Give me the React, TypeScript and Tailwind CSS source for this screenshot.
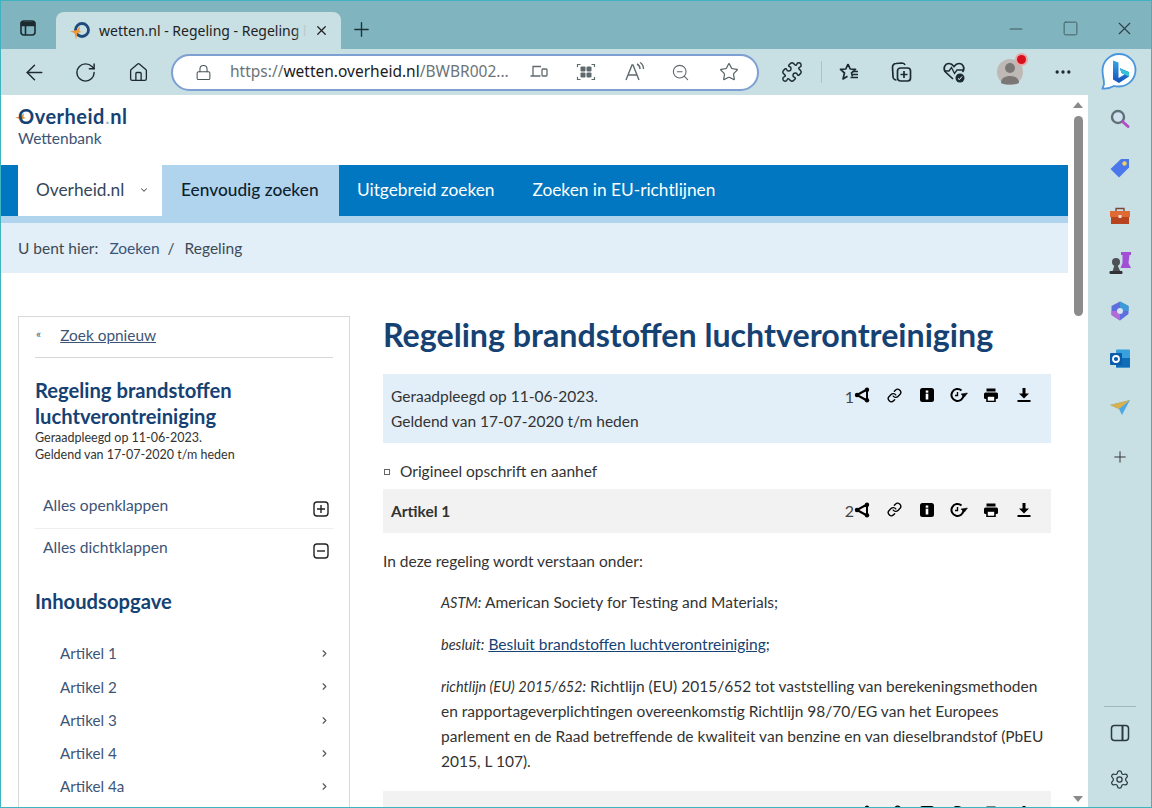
import React from 'react';
import {
  ArrowLeft, RotateCw, Home, Lock, Star, ZoomOut, Puzzle, Plus, X, Minus, Square, ChevronDown, ChevronRight,
  MoreHorizontal, Settings, Link as LinkIcon,
} from 'lucide-react';

const font = { sans: 'font-["Lato","Noto_Sans",sans-serif]' };

function TabsIcon() {
  return (
    <svg width="20" height="20" viewBox="0 0 20 20" fill="none" stroke="#1c2b30" strokeWidth="1.6">
      <rect x="3" y="3" width="14" height="14" rx="3" />
      <path d="M3.5 4.5h13v3h-13z" fill="#1c2b30" />
      <path d="M7.5 7v10" />
    </svg>
  );
}

function Favicon() {
  return (
    <svg width="22" height="22" viewBox="0 0 22 22" fill="none">
      <circle cx="13" cy="10" r="6.500" stroke="#1f4a7c" strokeWidth="2.800" />
      <path d="M1 11.500l7-1.500 3-4-.5 5 2 1-4 1-1.500 6.500-1.500-6.500z" fill="#f09a37" />
    </svg>
  );
}

function ReadAloud() {
  return (
    <svg width="24" height="24" viewBox="0 0 24 24" fill="none" stroke="#5f6a6e" strokeWidth="1.4">
      <path d="M3 20L9 5h1l6 15M5.5 15h9" />
      <path d="M14 4c2 1 3 3 3 5M17 2.5c2.500 1.500 3.500 4 3.500 6.500" />
    </svg>
  );
}

function AppsIcon() {
  return (
    <svg width="20" height="20" viewBox="0 0 20 20" fill="none">
      <path d="M1.500 5V2.500h3M15.500 2.500h3V5M18.500 15v2.500h-3M4.500 17.500h-3V15" stroke="#5f6a6e" strokeWidth="1.200" />
      <rect x="4.500" y="4.500" width="5" height="5" rx="1" fill="#5f6a6e" />
      <rect x="10.500" y="4.500" width="5" height="5" rx="1" fill="#5f6a6e" />
      <rect x="4.500" y="10.500" width="5" height="5" rx="1" fill="#5f6a6e" />
      <rect x="10.500" y="10.500" width="5" height="5" rx="1" fill="#5f6a6e" />
    </svg>
  );
}

function DeviceIcon() {
  return (
    <svg width="20" height="20" viewBox="0 0 20 20" fill="none" stroke="#5f6a6e" strokeWidth="1.300">
      <path d="M12 4.500H4v9M1.500 14h10" />
      <rect x="13" y="7" width="5" height="7" rx="1" />
    </svg>
  );
}

function FavoritesIcon() {
  return (
    <svg width="24" height="24" viewBox="0 0 24 24" fill="none" stroke="#1c2b30" strokeWidth="1.700">
      <path d="M11 4l2.200 5 5.300.4-4 3.500 1 3.500M11 4L8.800 9l-5.300.4 4 3.600-1.500 6 4.500-2.800" strokeLinejoin="round" />
      <path d="M15.500 11.500H21M15.500 14.500H21M13.500 17.500H21" strokeWidth="1.300" />
    </svg>
  );
}

function CollectionsIcon() {
  return (
    <svg width="24" height="24" viewBox="0 0 24 24" fill="none" stroke="#1c2b30" strokeWidth="1.700">
      <path d="M7.500 20A3.500 3.500 0 0 1 4 16.500l-.5-9C3.400 5 5 3.500 7 3.500l6-.5c1.500 0 2.600.8 3 2" />
      <rect x="8.500" y="8" width="13" height="13" rx="3" />
      <path d="M15 11v7M11.500 14.500h7" />
    </svg>
  );
}

function HealthIcon() {
  return (
    <svg width="26" height="26" viewBox="0 0 26 26" fill="none">
      <path d="M12 20L4.500 13C1.500 9.500 4 4.500 8 4.500c2 0 3.500 1 5 3 1.500-2 3-3 5-3 4 0 6.500 5 3.500 8.500" stroke="#1c2b30" strokeWidth="1.700" />
      <path d="M3 12h5l2.500-3.500 3 6L16 11h6" stroke="#1c2b30" strokeWidth="1.300" />
      <circle cx="19" cy="19" r="4.500" fill="#1c2b30" />
      <path d="M17 19.500l1.500 1 2.500-3" stroke="#fff" strokeWidth="1" />
    </svg>
  );
}

function Avatar() {
  return (
    <div className="relative flex h-[26px] w-[26px] items-center justify-center overflow-visible rounded-full bg-[#bfb9b6]">
      <svg width="22" height="25" viewBox="0 0 22 25" fill="#7a7775">
        <circle cx="11" cy="8" r="5" />
        <path d="M2 23c0-5 4-7 9-7s9 2 9 7c-3 2-15 2-18 0z" />
      </svg>
      <span className="absolute right-[-3px] top-[-4px] h-[9px] w-[9px] rounded-full bg-[#d8101c] ring-2 ring-[#e6a6a8]" />
    </div>
  );
}

function BingButton() {
  return (
    <svg width="38" height="40" viewBox="0 0 38 40" fill="none">
      <defs>
        <linearGradient id="bingStem" x1="0" y1="0" x2="0" y2="1">
          <stop offset="0" stopColor="#37a5e8" />
          <stop offset="1" stopColor="#1450b8" />
        </linearGradient>
      </defs>
      <path d="M19 2C10 2 2.500 9.500 2.500 18.500c0 5 1.500 9 1.500 13 0 2-1 3.500-1.500 5 6 .5 9-1 11.500-2.500 1.500.4 3.300.5 5 .5 9 0 16.500-7.500 16.500-16.500S28 2 19 2z" fill="#fff" stroke="#4a96dc" strokeWidth="1.800" />
      <path d="M13 8.500l5.500 2v15.500l6-3.500-3-1.500-1.800-5 9.300 4v4.500L19 31l-6-3.500z" fill="url(#bingStem)" />
      <path d="M20 16.500l9 3.800v4.500l-4.500-2.300-3-1.500z" fill="#35c3d8" />
    </svg>
  );
}

function ShareIcon() {
  return (
    <svg width="16" height="16" viewBox="0 0 16 16" fill="none">
      <path d="M13 2.500L3 8l10 5.500z" stroke="#000" strokeWidth="2" strokeLinejoin="round" fill="none" />
      <circle cx="3" cy="8" r="2.200" fill="#000" />
      <circle cx="13" cy="2.700" r="2.200" fill="#000" />
      <circle cx="13" cy="13.300" r="2.200" fill="#000" />
    </svg>
  );
}

function InfoIcon() {
  return (
    <svg width="14" height="14" viewBox="0 0 14 14">
      <rect width="14" height="14" rx="2.500" fill="#000" />
      <rect x="5.700" y="2.500" width="2.600" height="2.200" fill="#fff" />
      <rect x="5.700" y="5.700" width="2.600" height="5.800" fill="#fff" />
    </svg>
  );
}

function HistoryIcon() {
  return (
    <svg width="18" height="16" viewBox="0 0 18 16" fill="none" stroke="#000">
      <path d="M13.500 8a6 6 0 1 1-2-4.500" strokeWidth="2" />
      <path d="M7.500 5v3.500H5" strokeWidth="1.400" />
      <path d="M11 7l3.500 3L17.500 6z" fill="#000" strokeWidth="0.500" />
    </svg>
  );
}

function PrintIcon() {
  return (
    <svg width="16" height="14" viewBox="0 0 16 14" fill="#000">
      <rect x="3.500" y="0.500" width="9" height="3" />
      <rect x="1" y="4.500" width="14" height="6.500" rx="1.500" />
      <rect x="4" y="8" width="8" height="5.500" fill="#fff" stroke="#000" strokeWidth="1.600" />
    </svg>
  );
}

function DownloadIcon() {
  return (
    <svg width="16" height="16" viewBox="0 0 16 16" fill="#000">
      <path d="M6.500 1h3v5.500H13L8 11.500 3 6.500h3.500z" />
      <rect x="1.500" y="13" width="13" height="2" />
    </svg>
  );
}

function ActionIcons({ index }: { index: number }) {
  return (
    <div className="flex items-center">
      <span className="mt-[3px] text-[16px] leading-none text-[#444]">{index}</span>
      <div className="flex w-[16px] justify-center"><ShareIcon /></div>
      <div className="ml-[16px] flex w-[16px] justify-center"><LinkIcon size={15} strokeWidth={2.200} color="#000" /></div>
      <div className="ml-[17px] flex w-[16px] justify-center"><InfoIcon /></div>
      <div className="ml-[15px] flex w-[18px] justify-center"><HistoryIcon /></div>
      <div className="ml-[15px] flex w-[16px] justify-center"><PrintIcon /></div>
      <div className="ml-[17px] flex w-[16px] justify-center"><DownloadIcon /></div>
    </div>
  );
}

function SidebarIcons() {
  return (
    <div className="flex flex-col items-center">
      <svg className="mt-[13px]" width="22" height="22" viewBox="0 0 22 22" fill="none">
        <circle cx="9" cy="9" r="6" stroke="#5f7076" strokeWidth="2.400" fill="#cfe2ee" />
        <path d="M13.500 13.500l5.500 5" stroke="#b04ec8" strokeWidth="3" strokeLinecap="round" />
      </svg>
      <svg className="mt-[27px]" width="22" height="22" viewBox="0 0 22 22">
        <path d="M1.500 12L12 2h8v8.500L10 20.500z" fill="#4a77ea" />
        <circle cx="15.500" cy="6.500" r="2.200" fill="#f2d25b" />
      </svg>
      <svg className="mt-[26px]" width="22" height="22" viewBox="0 0 22 22">
        <path d="M7 6V3.500h8V6" fill="none" stroke="#7b4a36" strokeWidth="1.400" />
        <rect x="1" y="6" width="20" height="6" fill="#df6a34" />
        <rect x="2" y="12" width="18" height="7" fill="#b8431f" />
        <rect x="9.500" y="10" width="3" height="3" fill="#f6dfd0" />
      </svg>
      <svg className="mt-[24px]" width="24" height="24" viewBox="0 0 24 24">
        <rect x="13" y="1" width="10" height="3" fill="#a24fd6" />
        <path d="M14.500 4h7l-1 8 2.500 5H12.500l2-5z" fill="#a24fd6" />
        <circle cx="8" cy="11" r="4" fill="#4d5054" />
        <path d="M4 22l2.500-8h3l3.500 8z" fill="#4d5054" />
        <rect x="1.500" y="20" width="13" height="3" rx="1" fill="#303235" />
      </svg>
      <svg className="mt-[25px]" width="22" height="22" viewBox="0 0 22 22" fill="none">
        <path d="M11 1.500L19.500 6v8L11 20.500 2.500 15V6z" fill="#5c6fdc" />
        <path d="M11 1.500L19.500 6v5H14a3 3 0 0 0-3-3z" fill="#3e9ad6" />
        <path d="M2.500 11H8a3 3 0 0 0 3 3v6.500L2.500 15z" fill="#b36ad6" />
        <circle cx="11" cy="11" r="3" fill="#d9e4f2" />
      </svg>
      <svg className="mt-[26px]" width="22" height="22" viewBox="0 0 22 22">
        <rect x="7" y="1.500" width="14" height="18" rx="1" fill="#38a0dc" />
        <rect x="7" y="10" width="14" height="9.500" fill="#0f6cb6" />
        <rect x="1" y="5" width="12" height="12" rx="1" fill="#0a5ba8" />
        <circle cx="7" cy="11" r="3" fill="none" stroke="#fff" strokeWidth="1.800" />
      </svg>
      <svg className="mt-[28px]" width="22" height="20" viewBox="0 0 22 20">
        <path d="M1 7L21 2l-8 15-3-6z" fill="#4da8e4" />
        <path d="M1 7l9 4 11-9z" fill="#d8b14e" />
      </svg>
      <Plus className="mt-[30px]" size={18} strokeWidth={1.300} color="#333" />
    </div>
  );
}

function Address() {
  return (
    <div className="ml-[22px] flex h-[37px] w-[588px] items-center rounded-full border-2 border-[#7d9fd2] bg-white pl-[22px]">
      <Lock size={17} strokeWidth={1.500} color="#4a5559" />
      <span className='ml-[18px] font-["Noto_Sans",sans-serif] text-[15.500px] text-[#6c7478]'>
        https://<span className="text-[#1a1a1a]">wetten.overheid.nl</span>/BWBR002...
      </span>
      <div className="ml-[20px]"><DeviceIcon /></div>
      <div className="ml-[27px]"><AppsIcon /></div>
      <div className="ml-[27px]"><ReadAloud /></div>
      <ZoomOut className="ml-[24px]" size={19} strokeWidth={1.400} color="#5f6a6e" />
      <Star className="ml-[29px]" size={20} strokeWidth={1.400} color="#4f5a5e" />
    </div>
  );
}

function Browser() {
  return (
    <>
      {/* tab strip */}
      <div className="flex h-[48px] items-end bg-[#80b4bf] pl-[17px]">
        <div className="mb-[9px] flex h-[24px] items-center"><TabsIcon /></div>
        <div className="ml-[18px] flex h-[37px] w-[285px] items-center rounded-t-[8px] bg-[#c8dfe4] pl-[13px]">
          <Favicon />
          <div className="relative ml-[8px] w-[207px] overflow-hidden">
            <span className='block whitespace-nowrap font-["Noto_Sans",sans-serif] text-[14px] text-[#222]'>
              wetten.nl - Regeling - Regeling b
            </span>
            <div className="absolute inset-y-0 right-0 w-[12px] bg-linear-to-r from-transparent to-[#c8dfe4]" />
          </div>
          <X className="ml-[8px] shrink-0" size={15} strokeWidth={2} color="#222" />
        </div>
        <Plus className="mb-[8px] ml-[9px]" size={23} strokeWidth={1.400} color="#1f3036" />
        <div className="mb-[10px] ml-auto flex items-center">
          <div className="flex w-[54px] justify-center"><Minus size={20} strokeWidth={1.300} color="#41565c" /></div>
          <div className="flex w-[54px] justify-center"><Square size={17} strokeWidth={1.300} color="#41565c" /></div>
          <div className="flex w-[54px] justify-center"><X size={21} strokeWidth={1.300} color="#2f4046" /></div>
        </div>
      </div>
      {/* toolbar */}
      <div className="flex h-[46px] items-center bg-[#c8dfe4] pl-[21px]">
        <ArrowLeft size={25} strokeWidth={1.400} color="#1c2b30" />
        <RotateCw className="ml-[27px]" size={23} strokeWidth={1.500} color="#1c2b30" />
        <Home className="ml-[31px]" size={21} strokeWidth={1.500} color="#1c2b30" />
        <Address />
        <Puzzle className="ml-[22px]" size={22} strokeWidth={1.600} color="#1c2b30" />
        <div className="ml-[18px] h-[22px] w-px bg-[#aac3c9]" />
        <div className="ml-[15px]"><FavoritesIcon /></div>
        <div className="ml-[28px]"><CollectionsIcon /></div>
        <div className="ml-[28px]"><HealthIcon /></div>
        <div className="ml-[30px]"><Avatar /></div>
        <MoreHorizontal className="ml-[30px]" size={20} strokeWidth={2} color="#1c2b30" />
        <div className="ml-[27px] shrink-0"><BingButton /></div>
      </div>
    </>
  );
}

function SiteHeader() {
  return (
    <>
      <div className="h-[70px] pl-[17px] pt-[10px]">
        <div className="relative text-[20px] font-bold leading-[22px] tracking-[0.5px] text-[#154273]">
          <svg className="absolute left-[-3px] top-[6px]" width="14" height="14" viewBox="0 0 14 14">
            <path d="M0 6.500l6-1 3-3.500-.5 4 2.500 1-3.500 1-1 5-1.500-5z" fill="#e8902c" />
          </svg>
          <span className="relative">Overheid<span className="font-normal text-[#9db6c9]">.</span>nl</span>
        </div>
        <div className="text-[15.500px] leading-[22px] text-[#3d5476]">Wettenbank</div>
      </div>
      <div className="flex h-[51px] bg-[#0077c0] pl-[17px] text-[17.300px]">
        <div className="flex w-[144px] items-center bg-white pb-[2px] pl-[18px] text-[#33475b]">
          Overheid.nl
          <ChevronDown className="ml-[15px]" size={10} strokeWidth={2.500} color="#555" />
        </div>
        <div className="flex w-[177px] items-center bg-[#b1d4ee] pb-[2px] pl-[19px] font-medium text-[#0f1f2e]">Eenvoudig zoeken</div>
        <div className="flex items-center pb-[2px] pl-[18px] text-white">Uitgebreid zoeken</div>
        <div className="flex items-center pb-[2px] pl-[38px] text-white">Zoeken in EU-richtlijnen</div>
      </div>
      <div className="h-[7px] bg-[#b1d4ee]" />
      <div className="flex h-[50px] items-center bg-[#e2eff8] pl-[17px] pt-[1px] text-[15.500px] text-[#3f4a54]">
        <span>U bent hier:</span>
        <span className="ml-[11px] text-[#3d5476]">Zoeken</span>
        <span className="ml-[8px]">/</span>
        <span className="ml-[10px]">Regeling</span>
      </div>
    </>
  );
}

function LeftPanel() {
  const articles = ['Artikel 1', 'Artikel 2', 'Artikel 3', 'Artikel 4', 'Artikel 4a'];
  return (
    <aside className="h-[520px] w-[332px] shrink-0 border border-[#d9d9d9] px-[16px]">
      <div className="flex h-[41px] items-center border-b border-[#d6d6d6] pb-[2px] text-[15.400px]">
        <span className="mb-[4px] ml-px text-[12px] leading-none text-[#4b5d74]">«</span>
        <span className="ml-[19px] text-[#3d5476] underline">Zoek opnieuw</span>
      </div>
      <h2 className="mt-[19px] text-[20.200px] font-bold leading-[26px] text-[#154273]">
        Regeling brandstoffen<br />luchtverontreiniging
      </h2>
      <p className="text-[12.500px] leading-[17px] text-[#333]">
        Geraadpleegd op 11-06-2023.<br />Geldend van 17-07-2020 t/m heden
      </p>
      <div className="mt-[23px] flex h-[43px] items-center justify-between border-b border-[#eeeeee] pl-[8px] pr-[4px] text-[15.600px] text-[#3d5476]">
        <span className="mb-[3px]">Alles openklappen</span>
        <svg width="16" height="16" viewBox="0 0 16 16" fill="none" stroke="#222" strokeWidth="1.400" className="mt-[3px]">
          <rect x="1" y="1" width="14" height="14" rx="3" />
          <path d="M4 8h8M8 4v8" />
        </svg>
      </div>
      <div className="flex h-[41px] items-center justify-between pl-[8px] pr-[4px] text-[15.600px] text-[#3d5476]">
        <span className="mb-[3px]">Alles dichtklappen</span>
        <svg width="16" height="16" viewBox="0 0 16 16" fill="none" stroke="#222" strokeWidth="1.400" className="mt-[3px]">
          <rect x="1" y="1" width="14" height="14" rx="3" />
          <path d="M4 8h8" />
        </svg>
      </div>
      <h3 className="mt-[18px] text-[20.200px] font-bold leading-[26px] text-[#154273]">Inhoudsopgave</h3>
      <ul className="mt-[23px]">
        {articles.map((a) => (
          <li key={a} className="flex h-[33.300px] items-center justify-between pl-[25px] pr-[3px] text-[15.200px] text-[#3d5476]">
            {a}
            <ChevronRight size={11} strokeWidth={2.500} color="#555" />
          </li>
        ))}
      </ul>
    </aside>
  );
}

function MainContent() {
  return (
    <main className="ml-[33px] w-[668px] text-[15.500px] text-[#333]">
      <h1 className="whitespace-nowrap text-[32.200px] font-bold leading-[38px] text-[#154273]">Regeling brandstoffen luchtverontreiniging</h1>
      <div className="mt-[20px] flex h-[69px] justify-between bg-[#e2eff8] pl-[8px] pr-[19px]">
        <p className="pt-[10px] leading-[25px]">
          Geraadpleegd op 11-06-2023.<br />Geldend van 17-07-2020 t/m heden
        </p>
        <div className="flex h-[42px] items-center"><ActionIcons index={1} /></div>
      </div>
      <div className="flex h-[46px] items-center pl-[1px] pt-[12px]">
        <span className="h-[6px] w-[6px] border border-[#666]" />
        <span className="ml-[10px]">Origineel opschrift en aanhef</span>
      </div>
      <div className="flex h-[44px] items-center justify-between bg-[#f2f2f2] pl-[8px] pr-[19px]">
        <strong className="mt-[2px] font-bold">Artikel 1</strong>
        <div className="mb-[3px]"><ActionIcons index={2} /></div>
      </div>
      <p className="mt-[16px] leading-[24px]">In deze regeling wordt verstaan onder:</p>
      <div className="mt-[17px] pl-[58px] leading-[25px]">
        <p><i className="text-[14.500px]">ASTM:</i> American Society for Testing and Materials;</p>
        <p className="mt-[17px]"><i className="text-[14.500px]">besluit:</i> <span className="text-[#154273] underline">Besluit brandstoffen luchtverontreiniging</span>;</p>
        <p className="mt-[17px] whitespace-nowrap">
          <i className="text-[14.500px]">richtlijn (EU) 2015/652:</i> Richtlijn (EU) 2015/652 tot vaststelling van berekeningsmethoden<br />
          en rapportageverplichtingen overeenkomstig Richtlijn 98/70/EG van het Europees<br />
          parlement en de Raad betreffende de kwaliteit van benzine en van dieselbrandstof (PbEU<br />
          2015, L 107).
        </p>
      </div>
      <div className="mt-[17px] flex h-[44px] items-start justify-end bg-[#f2f2f2] pr-[19px] pt-[12px]">
        <ActionIcons index={3} />
      </div>
    </main>
  );
}

function Scrollbar() {
  return (
    <div className="flex w-[20px] shrink-0 flex-col items-center bg-white pt-[7px]">
      <div className="h-0 w-0 border-x-[5px] border-b-[6px] border-x-transparent border-b-[#8a8a8a]" />
      <div className="mt-[8px] h-[200px] w-[9px] rounded-full bg-[#8c8c8c]" />
      <div className="mb-[5px] mt-auto h-0 w-0 border-x-[5px] border-t-[6px] border-x-transparent border-t-[#8a8a8a]" />
    </div>
  );
}

export default function App() {
  return (
    <div className={`h-[808px] w-[1152px] overflow-hidden border border-[#3fb4bf] bg-[#c8dfe4] ${font.sans}`}>
      <Browser />
      <div className="flex h-[712px]">
        <div className="flex w-[1087px] shrink-0 overflow-hidden bg-white">
          <div className="w-[1067px] shrink-0">
            <SiteHeader />
            <div className="flex pl-[17px] pt-[43px]">
              <LeftPanel />
              <MainContent />
            </div>
          </div>
          <Scrollbar />
        </div>
        <div className="flex flex-1 flex-col items-center">
          <SidebarIcons />
          <div className="mt-auto h-px w-[32px] bg-[#9fb9bf]" />
          <svg className="mt-[17px]" width="20" height="18" viewBox="0 0 20 18" fill="none" stroke="#2a3a40" strokeWidth="1.500">
            <rect x="1.500" y="1.500" width="17" height="15" rx="3" />
            <path d="M12.500 1.500v15" strokeWidth="2" />
          </svg>
          <Settings className="mb-[17px] mt-[27px]" size={21} strokeWidth={1.400} color="#2a3a40" />
        </div>
      </div>
    </div>
  );
}
